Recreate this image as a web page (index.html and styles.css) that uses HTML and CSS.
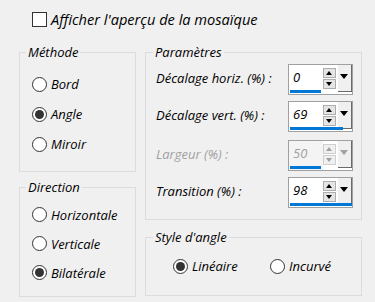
FILE: index.html
```html
<html>

<head>
   <title>Mosaïque</title>
   <link rel="stylesheet" href="styles.css">
</head>

<body>
   <div class="top">
      <label class="check"><span class="box"></span>Afficher l'aperçu de la mosaïque</label>
   </div>

   <div class="panes">
      <div class="col col-left">
         <div class="group methode">
            <span class="cap">Méthode</span>
            <label class="opt"><span class="radio"></span>Bord</label>
            <label class="opt"><span class="radio on"></span>Angle</label>
            <label class="opt"><span class="radio"></span>Miroir</label>
         </div>
         <div class="group direction">
            <span class="cap">Direction</span>
            <label class="opt"><span class="radio"></span>Horizontale</label>
            <label class="opt"><span class="radio"></span>Verticale</label>
            <label class="opt"><span class="radio on"></span>Bilatérale</label>
         </div>
      </div>

      <div class="col col-right">
         <div class="group params">
            <span class="cap">Paramètres</span>
            <div class="row">
               <span class="name">Décalage horiz. (%) :</span>
               <div class="spin">
                  <span class="val">0</span>
                  <span class="arrows"><b class="btn up"></b><b class="btn down"></b></span>
                  <span class="drop"></span>
                  <i class="bar" style="width: 31px"></i>
               </div>
            </div>
            <div class="row">
               <span class="name">Décalage vert. (%) :</span>
               <div class="spin">
                  <span class="val">69</span>
                  <span class="arrows"><b class="btn up"></b><b class="btn down"></b></span>
                  <span class="drop"></span>
                  <i class="bar" style="width: 53px"></i>
               </div>
            </div>
            <div class="row off">
               <span class="name">Largeur (%) :</span>
               <div class="spin">
                  <span class="val">50</span>
                  <span class="arrows"><b class="btn up"></b><b class="btn down"></b></span>
                  <span class="drop"></span>
                  <i class="bar" style="width: 31px"></i>
               </div>
            </div>
            <div class="row">
               <span class="name">Transition (%) :</span>
               <div class="spin">
                  <span class="val">98</span>
                  <span class="arrows"><b class="btn up"></b><b class="btn down"></b></span>
                  <span class="drop"></span>
                  <i class="bar" style="width: 62px"></i>
               </div>
            </div>
         </div>
         <div class="group style">
            <span class="cap">Style d'angle</span>
            <div class="inline">
               <label class="opt first"><span class="radio on"></span>Linéaire</label>
               <label class="opt"><span class="radio"></span>Incurvé</label>
            </div>
         </div>
      </div>
   </div>
</body>

</html>
```

FILE: styles.css
```css
body {
   margin: 0;
   background: #f0f0f0;
   color: #000;
   font-family: "Open Sans", sans-serif;
   font-style: italic;
   font-size: 13px;
}

.top {
   height: 52px;
   box-sizing: border-box;
   padding: 12px 0 0 32px;
}

.check,
.opt {
   display: flex;
   align-items: center;
   gap: 4px;
}

.check {
   font-size: 14.6px;
   line-height: 15px;
}

.box {
   width: 13px;
   height: 13px;
   border: 1px solid #333;
   background: #fff;
}

.panes {
   display: grid;
   grid-template-columns: 117px 217px;
   column-gap: 9px;
   padding-left: 19px;
}

.col {
   display: flex;
   flex-direction: column;
}

.col-left {
   gap: 15px;
}

.col-right {
   gap: 17px;
}

.group {
   position: relative;
   box-sizing: border-box;
   border: 1px solid #dcdcdc;
}

/* caption sits on the top border */
.cap {
   position: absolute;
   top: -10px;
   left: 6px;
   padding: 0 2px;
   line-height: 18px;
   background: #f0f0f0;
}

.params .cap,
.style .cap {
   left: 7px;
}

.methode {
   height: 120px;
   padding: 16px 0 0 12px;
}

.methode .opt {
   height: 30px;
}

.direction {
   height: 110px;
   padding: 12px 0 0 12px;
}

.direction .opt {
   height: 29px;
}

.radio {
   position: relative;
   width: 13px;
   height: 13px;
   border: 1px solid #333;
   border-radius: 50%;
   background: #fff;
}

.radio.on::after {
   content: "";
   position: absolute;
   left: 2px;
   top: 2px;
   width: 9px;
   height: 9px;
   border-radius: 50%;
   background: #333;
}

/* parametres */

.params {
   height: 168px;
   padding: 11px 8px 0 10px;
}

.row {
   display: flex;
   align-items: center;
   margin-bottom: 6px;
}

.row:nth-of-type(2) {
   margin-bottom: 8px;
}

.name {
   flex: 1;
   padding-bottom: 3px;
}

.spin {
   position: relative;
   display: flex;
   width: 65px;
   height: 31px;
   box-sizing: border-box;
   border: 1px solid #a0a0a0;
   background: #fff;
}

.val {
   width: 31px;
   padding: 2px 0 0 4px;
   line-height: 20px;
}

.arrows {
   display: flex;
   flex-direction: column;
   gap: 1px;
   width: 13px;
   padding-top: 3px;
}

.btn {
   position: relative;
   height: 10px;
   box-sizing: border-box;
   border: 1px solid #adadad;
   background: #e5e5e5;
}

.btn::after {
   content: "";
   position: absolute;
   left: 2px;
   top: 2px;
   border-left: 3.5px solid transparent;
   border-right: 3.5px solid transparent;
}

.btn.up::after {
   border-bottom: 4px solid #000;
}

.btn.down::after {
   border-top: 4px solid #000;
}

.drop {
   position: relative;
   width: 14px;
   height: 27px;
   margin-left: 2px;
   box-sizing: border-box;
   background: #f0f0f0;
   border-right: 1px solid #696969;
   border-bottom: 1px solid #696969;
}

.drop::after {
   content: "";
   position: absolute;
   left: 2px;
   top: 9px;
   border-left: 4.5px solid transparent;
   border-right: 4.5px solid transparent;
   border-top: 5px solid #000;
}

.bar {
   position: absolute;
   left: 1px;
   bottom: 1px;
   height: 3px;
   background: #0078d7;
}

.off .name,
.off .val {
   color: #a0a0a0;
}

.off .val {
   background: #f4f4f4;
}

.off .btn {
   background: #f0f0f0;
   border-color: #cfcfcf;
}

.off .btn.up::after {
   border-bottom-color: #a0a0a0;
}

.off .btn.down::after {
   border-top-color: #a0a0a0;
}

.off .drop::after {
   border-top-color: #a0a0a0;
}

.style {
   height: 59px;
   padding: 13px 0 0 27px;
}

.inline {
   display: flex;
   height: 30px;
}

.inline .first {
   width: 97px;
}
```
